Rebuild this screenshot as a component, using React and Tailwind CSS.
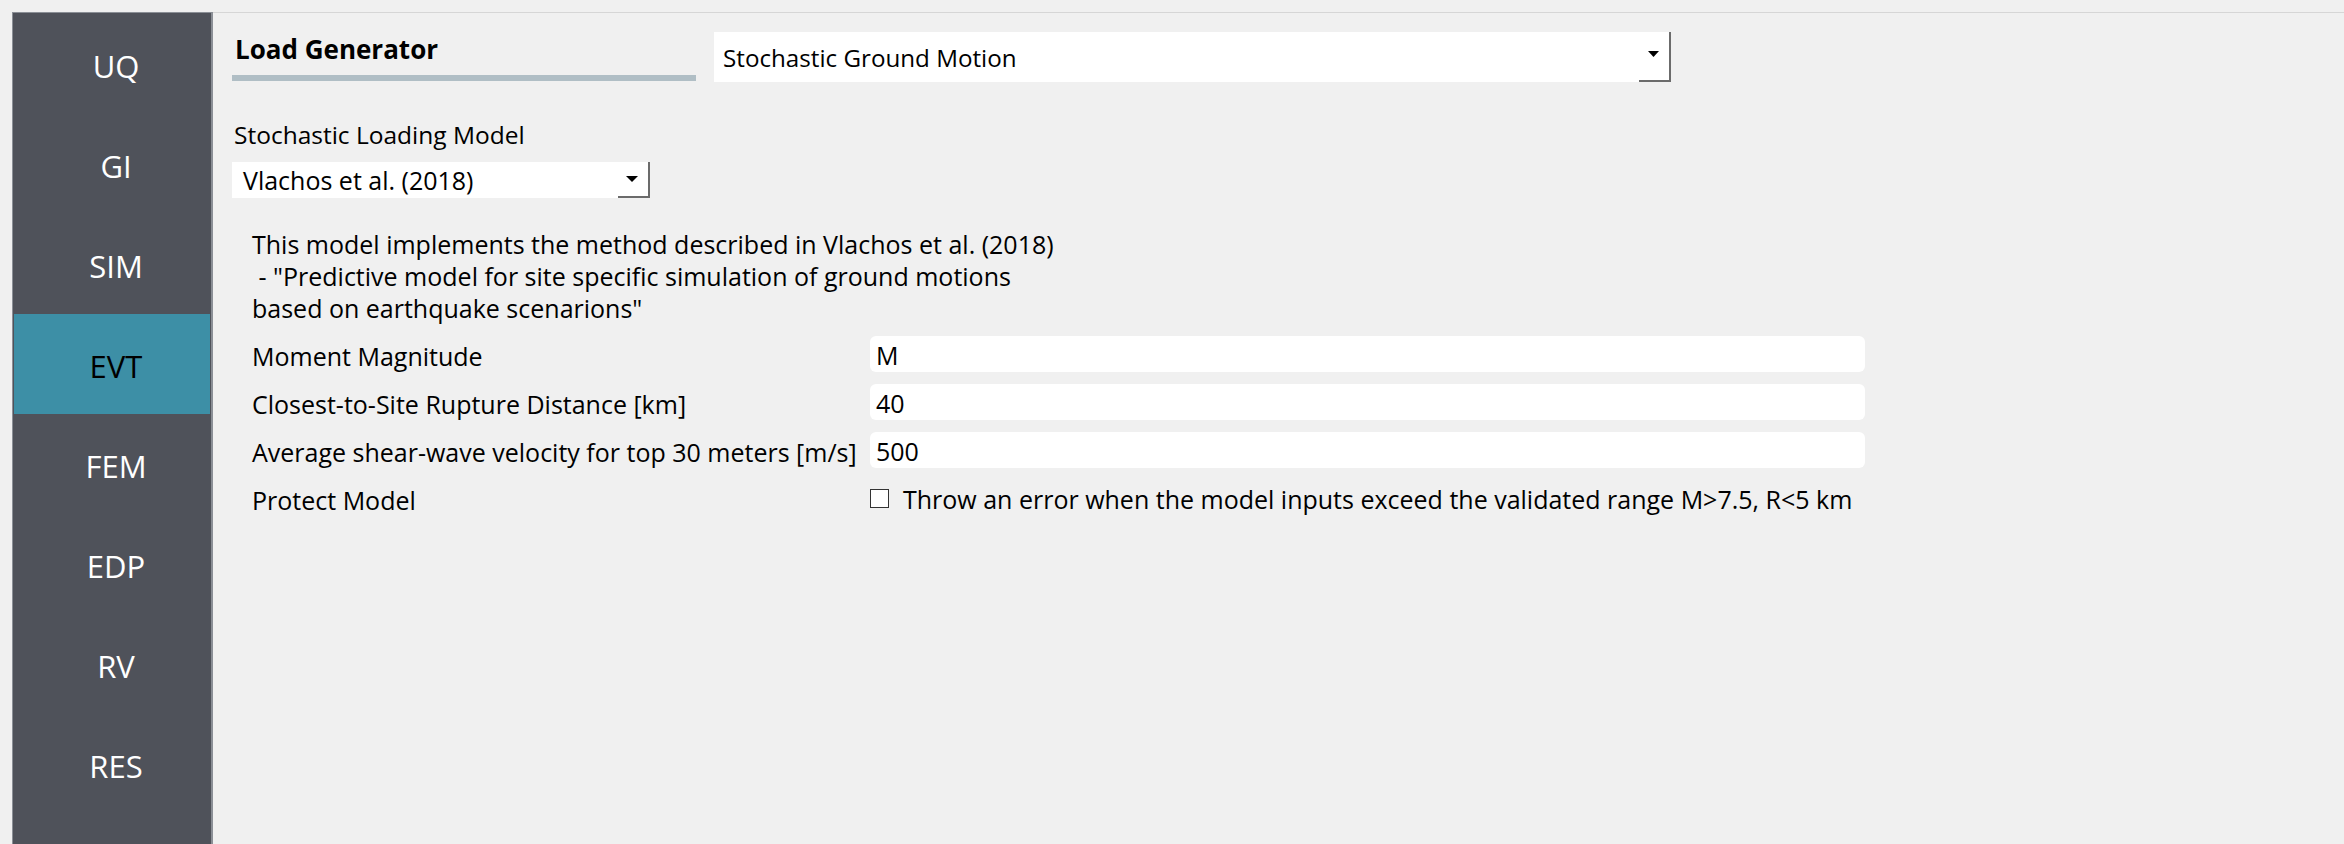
import React from "react";

const items = ["UQ", "GI", "SIM", "EVT", "FEM", "EDP", "RV", "RES"];

function Arrow({ w = 11, h = 6 }) {
  return (
    <svg width={w} height={h} viewBox={`0 0 ${w} ${h}`} className="block">
      <polygon points={`0,0 ${w},0 ${w / 2},${h}`} fill="#000" />
    </svg>
  );
}

function Field({ value }) {
  return (
    <div className="h-[36px] bg-white rounded-[6px] pl-[6px] flex items-center">
      <span className="pt-[2px] leading-[33px]">{value}</span>
    </div>
  );
}

export default function App() {
  return (
    <div
      className="w-[2344px] h-[844px] bg-[#f0f0f0] overflow-hidden flex pt-[12px] pl-[12px] text-black text-[25px]"
      style={{ fontFamily: '"Open Sans", "Noto Sans", sans-serif' }}
    >
      <div className="w-[201px] h-[832px] shrink-0 bg-[#4f525a] border-l border-t border-r-2 border-[#8b8f96] p-[1px]">
        {items.map((it) => (
          <div
            key={it}
            className={`h-[100px] flex items-center justify-center pt-[5px] pl-[8px] text-[31px] leading-none ${
              it === "EVT" ? "bg-[#3d8fa6] text-black" : "text-white"
            }`}
          >
            {it}
          </div>
        ))}
      </div>

      <div className="flex-1 h-[832px] border-t border-[#d6d6d6] pl-[19px] pt-[19px]">
        <div className="flex h-[50px] gap-[18px]">
          <div className="w-[464px] h-[50px] flex flex-col justify-between pb-[1px]">
            <div className="font-bold text-[26px] leading-[32px] pl-[3px] pt-[1px]">Load Generator</div>
            <div className="h-[6px] bg-[#b0bec5]" />
          </div>
          <div className="flex bg-white w-[957px] h-[50px]">
            <div className="flex-1 flex items-center pl-[9px] whitespace-nowrap text-[24.2px]">
              <span className="pt-[3px]">Stochastic Ground Motion</span>
            </div>
            <div className="w-[32px] h-full border-r-2 border-b-2 border-[#6b6b6b] flex justify-center pt-[19px] pr-[2px]">
              <Arrow />
            </div>
          </div>
        </div>

        <div className="mt-[37px] leading-[32px] pl-[2px] text-[24.5px]">Stochastic Loading Model</div>
        <div className="mt-[11px] w-[418px] h-[36px] flex bg-white">
          <div className="flex-1 flex items-center pl-[11px] whitespace-nowrap">
            <span className="pt-[2px]">Vlachos et al. (2018)</span>
          </div>
          <div className="w-[32px] h-full border-r-2 border-b-2 border-[#6b6b6b] flex justify-center pt-[14px] pr-[2px]">
            <Arrow w={12} h={6} />
          </div>
        </div>

        <div className="pl-[20px]">
          <div className="mt-[30px] leading-[32px] whitespace-pre">
            <div>This model implements the method described in Vlachos et al. (2018)</div>
            <div>{' - "Predictive model for site specific simulation of ground motions'}</div>
            <div>{'based on earthquake scenarions"'}</div>
          </div>

          <div className="mt-[12px] grid grid-cols-[618px_995px] gap-y-[12px]">
            <div className="h-[36px] leading-[36px] pt-[2px] whitespace-nowrap">Moment Magnitude</div>
            <Field value="M" />
            <div className="h-[36px] leading-[36px] pt-[2px] whitespace-nowrap">Closest-to-Site Rupture Distance [km]</div>
            <Field value="40" />
            <div className="h-[36px] leading-[36px] pt-[2px] whitespace-nowrap">Average shear-wave velocity for top 30 meters [m/s]</div>
            <Field value="500" />
            <div className="h-[36px] leading-[36px] pt-[2px] whitespace-nowrap">Protect Model</div>
            <div className="h-[36px] flex items-center gap-[14px]">
              <div className="w-[19px] h-[19px] border border-[#333] bg-white shrink-0" />
              <span className="leading-[36px] pt-[2px] whitespace-nowrap">
                Throw an error when the model inputs exceed the validated range M&gt;7.5, R&lt;5 km
              </span>
            </div>
          </div>
        </div>
      </div>
    </div>
  );
}
